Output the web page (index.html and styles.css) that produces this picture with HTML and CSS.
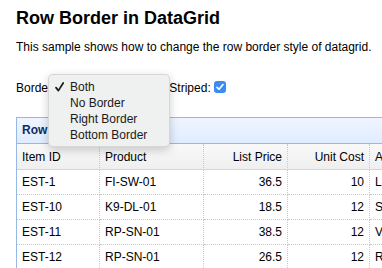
FILE: index.html
```html
<!DOCTYPE html>
<html lang="en">
<head>
    <meta charset="UTF-8">
    <title>Row Border in DataGrid</title>
    <link rel="stylesheet" href="styles.css">
</head>
<body>
    <h2>Row Border in DataGrid</h2>
    <p>This sample shows how to change the row border style of datagrid.</p>

    <div class="toolbar">
        <span>Border:</span>
        <select class="border-select">
            <option selected>Both</option>
            <option>No Border</option>
            <option>Right Border</option>
            <option>Bottom Border</option>
        </select>
        <span class="striped-label">Striped:</span>
        <span class="checkbox">
            <svg width="8" height="8" viewBox="0 0 8 8"><path d="M1 4.3 L3.1 6.3 L7 1.6" fill="none" stroke="#fff" stroke-width="1.6" stroke-linecap="round" stroke-linejoin="round"/></svg>
        </span>
    </div>

    <!-- open menu of the select -->
    <div class="menu">
        <div class="menu-item">
            <svg class="tick" width="9" height="10" viewBox="0 0 9 10"><path d="M1 5.6 L3.4 8.6 L8.2 1" fill="none" stroke="#1a1a1a" stroke-width="1.7" stroke-linecap="round" stroke-linejoin="round"/></svg>
            Both
        </div>
        <div class="menu-item">No Border</div>
        <div class="menu-item">Right Border</div>
        <div class="menu-item">Bottom Border</div>
    </div>

    <div class="panel">
        <div class="panel-header">Row Border in DataGrid</div>
        <table class="grid">
            <thead>
                <tr>
                    <th class="c1">Item ID</th>
                    <th class="c2">Product</th>
                    <th class="c3 num">List Price</th>
                    <th class="c4 num">Unit Cost</th>
                    <th class="c5">Attribute</th>
                    <th class="c6">Status</th>
                </tr>
            </thead>
            <tbody>
                <tr><td>EST-1</td><td>FI-SW-01</td><td class="num">36.5</td><td class="num">10</td><td>Large</td><td>P</td></tr>
                <tr><td>EST-10</td><td>K9-DL-01</td><td class="num">18.5</td><td class="num">12</td><td>Spotted Adult Female</td><td>P</td></tr>
                <tr><td>EST-11</td><td>RP-SN-01</td><td class="num">38.5</td><td class="num">12</td><td>Venomless</td><td>P</td></tr>
                <tr><td>EST-12</td><td>RP-SN-01</td><td class="num">26.5</td><td class="num">12</td><td>Rattleless</td><td>P</td></tr>
                <tr><td>EST-13</td><td>RP-LI-02</td><td class="num">35.5</td><td class="num">12</td><td>Green Adult</td><td>P</td></tr>
            </tbody>
        </table>
    </div>
</body>
</html>
```

FILE: styles.css
```css
html, body {
    overflow: hidden;
}

body {
    margin: 0;
    padding: 0 0 0 16px;
    font-family: "Liberation Sans", Arial, sans-serif;
    font-size: 12px;
    color: #000;
    background: #fff;
}

h2 {
    margin: 7px 0 0;
    font-size: 18px;
    line-height: 22px;
    font-weight: bold;
}

p {
    margin: 10px 0 0;
    line-height: 17px;
}

.toolbar {
    display: flex;
    align-items: center;
    height: 22px;
    margin-top: 21px;
    line-height: 22px;
}

.border-select {
    width: 100px;
    margin-left: 4px;
    font-size: 12px;
}

.striped-label {
    margin-left: 10px;
}

.checkbox {
    display: flex;
    align-items: center;
    justify-content: center;
    width: 12px;
    height: 12px;
    margin-left: 3px;
    margin-top: -2px;
    border-radius: 3px;
    background: #3a8cf3;
}

/* dropdown popup (macOS style) */
.menu {
    position: absolute;
    left: 48px;
    top: 74px;
    width: 120px;
    padding: 4px 0 3px;
    border: 1px solid rgba(0, 0, 0, 0.1);
    border-radius: 5px;
    background: #eef1f0;
    box-shadow: 0 3px 10px rgba(0, 0, 0, 0.2);
    z-index: 10;
}

.menu-item {
    position: relative;
    height: 16px;
    line-height: 16px;
    padding-left: 21px;
    color: #1a1a1a;
}

.tick {
    position: absolute;
    left: 6px;
    top: 3px;
}

.panel {
    width: 700px;
    margin-top: 18px;
    border: 1px solid #95b8e7;
}

.panel-header {
    height: 25px;
    line-height: 25px;
    padding-left: 5px;
    font-weight: bold;
    color: #0e2d5f;
    background: linear-gradient(#eff5ff, #e0ecff);
    border-bottom: 1px solid #95b8e7;
}

.grid {
    border-collapse: separate;
    border-spacing: 0;
    table-layout: fixed;
    width: 700px;
}

.grid th,
.grid td {
    box-sizing: border-box;
    padding: 0 5px;
    text-align: left;
    white-space: nowrap;
    overflow: hidden;
    border-right: 1px dotted #c8c8c8;
    border-bottom: 1px dotted #c8c8c8;
}

.grid th {
    height: 26px;
    font-weight: normal;
    background: linear-gradient(#f9f9f9, #efefef);
    border-bottom: 1px solid #d4d4d4;
}

.grid td {
    height: 25px;
}

.grid .num {
    text-align: right;
    padding-right: 5px;
}

.c1 { width: 83px; }
.c2 { width: 104px; }
.c3 { width: 84px; }
.c4 { width: 82px; }
.c5 { width: 250px; }
.c6 { width: 97px; }
```
